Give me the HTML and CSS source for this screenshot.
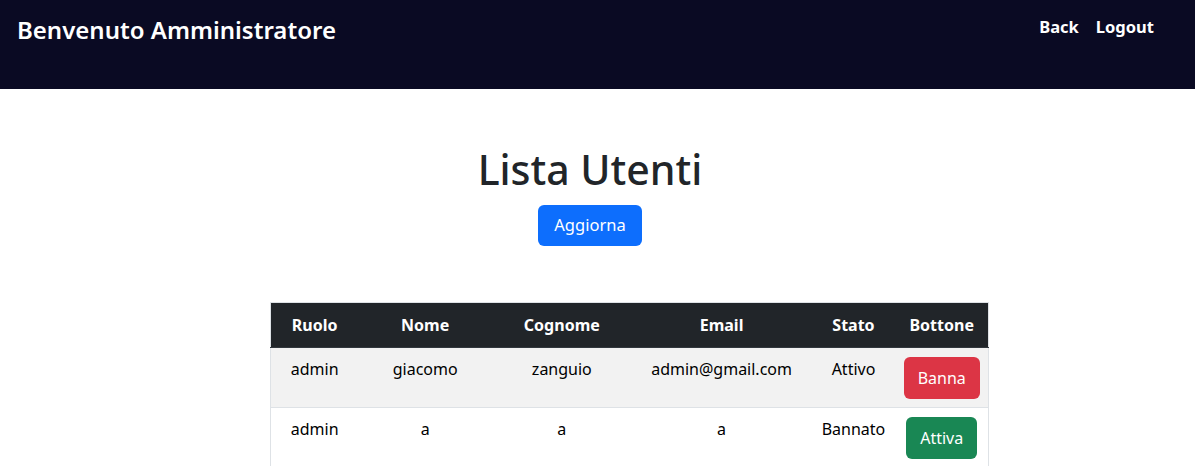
FILE: index.html
```html
<!DOCTYPE html>
<html lang="it">
<head>
<meta charset="utf-8">
<title>Lista Utenti</title>
<link rel="stylesheet" href="styles.css">
</head>
<body>
<header class="topbar">
  <h2 class="brand">Benvenuto Amministratore</h2>
  <nav class="nav">
    <a href="#" class="nav-link">Back</a>
    <a href="#" class="nav-link">Logout</a>
  </nav>
</header>
<main class="content">
  <h1 class="title">Lista Utenti</h1>
  <button class="btn btn-primary">Aggiorna</button>
  <table class="users">
    <colgroup>
      <col class="c1"><col class="c2"><col class="c3"><col class="c4"><col class="c5"><col class="c6">
    </colgroup>
    <thead>
      <tr><th>Ruolo</th><th>Nome</th><th>Cognome</th><th>Email</th><th>Stato</th><th>Bottone</th></tr>
    </thead>
    <tbody>
      <tr class="striped">
        <td>admin</td><td>giacomo</td><td>zanguio</td><td>admin@gmail.com</td><td>Attivo</td>
        <td><button class="btn btn-danger">Banna</button></td>
      </tr>
      <tr>
        <td>admin</td><td>a</td><td>a</td><td>a</td><td>Bannato</td>
        <td><button class="btn btn-success">Attiva</button></td>
      </tr>
    </tbody>
  </table>
</main>
</body>
</html>
```
FILE: styles.css
```css
* { box-sizing: border-box; }
body {
  margin: 0;
  font-family: "Noto Sans", "Open Sans", sans-serif;
  color: #212529;
  background: #fff;
}
.topbar {
  height: 89px;
  background: #0a0a23;
  display: flex;
  justify-content: space-between;
  align-items: flex-start;
  padding: 0 41px 0 17px;
}
.brand {
  margin: 13px 0 0;
  font-size: 24px;
  font-weight: 600;
  color: #fff;
}
.nav {
  display: flex;
  gap: 17px;
  margin-top: 15px;
}
.nav-link {
  color: #fff;
  text-decoration: none;
  font-weight: 700;
  font-size: 16.5px;
}
.content {
  width: 1180px;
  display: flex;
  flex-direction: column;
  align-items: center;
  padding-top: 56px;
}
.title {
  margin: 0;
  font-size: 41px;
  font-weight: 500;
  line-height: 1.2;
}
.btn {
  border: 1px solid transparent;
  border-radius: 6px;
  color: #fff;
  font-family: inherit;
  font-size: 16px;
  line-height: 1.5;
  cursor: pointer;
}
.btn-primary {
  margin-top: 11px;
  background: #0d6efd;
  padding: 7px 15px;
  font-size: 16.5px;
}
.btn-danger { background: #dc3545; padding: 8px 13px; }
.btn-success { background: #198754; padding: 8px 13px; }
.users {
  margin-top: 56px;
  margin-left: 79px;
  width: 719px;
  border-collapse: collapse;
  border: 1px solid #dee2e6;
  font-size: 16px;
  line-height: 1.5;
  vertical-align: top;
}
.c1 { width: 88px; }
.c2 { width: 134px; }
.c3 { width: 140px; }
.c4 { width: 180px; }
.c5 { width: 84px; }
.c6 { width: 93px; }
.users th {
  background: #212529;
  color: #fff;
  font-weight: 700;
  padding: 10px 8px;
  text-align: center;
  border-bottom: 1px solid #32383e;
}
.users td {
  padding: 9px 8px 8px;
  text-align: center;
  color: #000;
  border-bottom: 1px solid #dee2e6;
  vertical-align: top;
}
.users .striped td { background: #f2f2f2; }
```
